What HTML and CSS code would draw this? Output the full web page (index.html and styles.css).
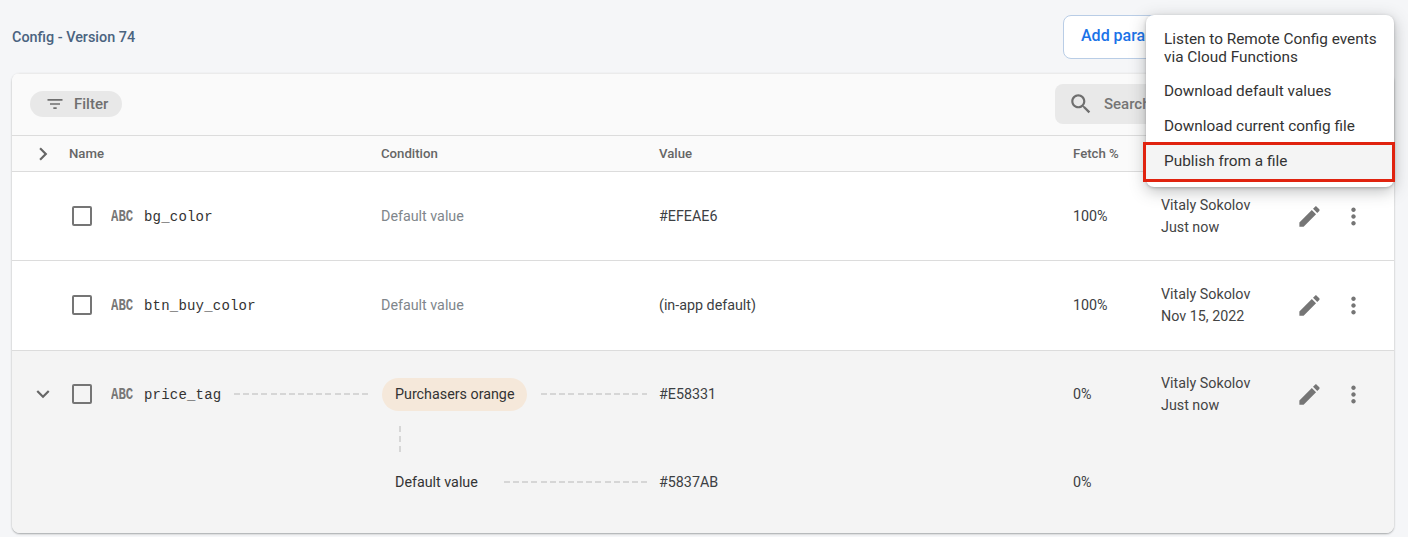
FILE: index.html
```html
<!DOCTYPE html>
<html lang="en">
<head>
    <meta charset="UTF-8">
    <meta name="viewport" content="width=device-width, initial-scale=1.0">
    <title>Remote Config</title>
    <link rel="stylesheet" href="styles.css">
</head>
<body>

    <div class="topbar">
        <span class="version">Config - Version 74</span>
        <div class="add-btn">Add parameter</div>
    </div>

    <div class="card">
        <div class="toolbar">
            <div class="filter">
                <svg class="filter-icon" viewBox="0 0 24 24"><path d="M10 18h4v-2h-4v2zM3 6v2h18V6H3zm3 7h12v-2H6v2z"/></svg>
                Filter
            </div>
            <div class="search">
                <svg class="search-icon" viewBox="0 0 24 24"><path d="M15.5 14h-.79l-.28-.27C15.41 12.59 16 11.11 16 9.5 16 5.91 13.09 3 9.5 3S3 5.91 3 9.5 5.91 16 9.5 16c1.61 0 3.09-.59 4.23-1.57l.27.28v.79l5 4.99L20.49 19l-4.99-5zm-6 0C7.01 14 5 11.99 5 9.5S7.01 5 9.5 5 14 7.01 14 9.5 11.99 14 9.5 14z"/></svg>
                Search
            </div>
        </div>

        <div class="grid head">
            <div class="toggle"><svg class="chevron" viewBox="0 0 24 24"><path d="M10 6L8.59 7.41 13.17 12l-4.58 4.59L10 18l6-6z"/></svg></div>
            <div>Name</div>
            <div>Condition</div>
            <div>Value</div>
            <div>Fetch %</div>
            <div></div>
        </div>

        <div class="grid row">
            <div class="toggle"></div>
            <div class="name">
                <span class="check"></span>
                <span class="abc">ABC</span>
                <span class="key">bg_color</span>
            </div>
            <div class="muted">Default value</div>
            <div>#EFEAE6</div>
            <div>100%</div>
            <div class="meta">
                <div class="who">Vitaly Sokolov<br>Just now</div>
                <svg class="icon" viewBox="0 0 24 24"><path d="M3 17.25V21h3.75L17.81 9.94l-3.75-3.75L3 17.25zM20.71 7.04c.39-.39.39-1.02 0-1.41l-2.34-2.34c-.39-.39-1.02-.39-1.41 0l-1.83 1.83 3.75 3.75 1.83-1.83z"/></svg>
                <svg class="icon dots" viewBox="0 0 24 24"><path d="M12 8c1.1 0 2-.9 2-2s-.9-2-2-2-2 .9-2 2 .9 2 2 2zm0 2c-1.1 0-2 .9-2 2s.9 2 2 2 2-.9 2-2-.9-2-2-2zm0 6c-1.1 0-2 .9-2 2s.9 2 2 2 2-.9 2-2-.9-2-2-2z"/></svg>
            </div>
        </div>

        <div class="grid row">
            <div class="toggle"></div>
            <div class="name">
                <span class="check"></span>
                <span class="abc">ABC</span>
                <span class="key">btn_buy_color</span>
            </div>
            <div class="muted">Default value</div>
            <div>(in-app default)</div>
            <div>100%</div>
            <div class="meta">
                <div class="who">Vitaly Sokolov<br>Nov 15, 2022</div>
                <svg class="icon" viewBox="0 0 24 24"><path d="M3 17.25V21h3.75L17.81 9.94l-3.75-3.75L3 17.25zM20.71 7.04c.39-.39.39-1.02 0-1.41l-2.34-2.34c-.39-.39-1.02-.39-1.41 0l-1.83 1.83 3.75 3.75 1.83-1.83z"/></svg>
                <svg class="icon dots" viewBox="0 0 24 24"><path d="M12 8c1.1 0 2-.9 2-2s-.9-2-2-2-2 .9-2 2 .9 2 2 2zm0 2c-1.1 0-2 .9-2 2s.9 2 2 2 2-.9 2-2-.9-2-2-2zm0 6c-1.1 0-2 .9-2 2s.9 2 2 2 2-.9 2-2-.9-2-2-2z"/></svg>
            </div>
        </div>

        <div class="expanded">
            <div class="grid row-open">
                <div class="toggle"><svg class="chevron" viewBox="0 0 24 24"><path d="M16.59 8.59L12 13.17 7.41 8.59 6 10l6 6 6-6z"/></svg></div>
                <div class="name">
                    <span class="check"></span>
                    <span class="abc">ABC</span>
                    <span class="key">price_tag</span>
                    <span class="dash dash-name"></span>
                </div>
                <div class="cond">
                    <span class="pill">Purchasers orange</span>
                    <span class="dash dash-cond"></span>
                </div>
                <div>#E58331</div>
                <div>0%</div>
                <div class="meta">
                    <div class="who">Vitaly Sokolov<br>Just now</div>
                    <svg class="icon" viewBox="0 0 24 24"><path d="M3 17.25V21h3.75L17.81 9.94l-3.75-3.75L3 17.25zM20.71 7.04c.39-.39.39-1.02 0-1.41l-2.34-2.34c-.39-.39-1.02-.39-1.41 0l-1.83 1.83 3.75 3.75 1.83-1.83z"/></svg>
                    <svg class="icon dots" viewBox="0 0 24 24"><path d="M12 8c1.1 0 2-.9 2-2s-.9-2-2-2-2 .9-2 2 .9 2 2 2zm0 2c-1.1 0-2 .9-2 2s.9 2 2 2 2-.9 2-2-.9-2-2-2zm0 6c-1.1 0-2 .9-2 2s.9 2 2 2 2-.9 2-2-.9-2-2-2z"/></svg>
                </div>
            </div>
            <div class="grid row-sub">
                <div></div>
                <div></div>
                <div class="cond cond-default">
                    <span class="connector"></span>
                    <span class="default-label">Default value</span>
                    <span class="dash dash-default"></span>
                </div>
                <div>#5837AB</div>
                <div>0%</div>
                <div></div>
            </div>
        </div>
    </div>

    <div class="menu">
        <div class="menu-item two-line">Listen to Remote Config events via Cloud Functions</div>
        <div class="menu-item">Download default values</div>
        <div class="menu-item">Download current config file</div>
        <div class="menu-item active">Publish from a file</div>
    </div>

</body>
</html>
```

FILE: styles.css
```css
html, body {
    height: 100%;
}

body {
    margin: 0;
    padding: 0 14px 0 12px;
    box-sizing: border-box;
    overflow: hidden;
    font-family: Roboto, Arial, sans-serif;
    font-size: 14.3px;
    color: #3c4043;
    background-color: #f5f6f8;
}

.topbar {
    display: flex;
    align-items: center;
    justify-content: space-between;
    height: 73px;
}

.version {
    padding-top: 1px;
    font-size: 14.4px;
    font-weight: 500;
    color: #4a6380;
}

.add-btn {
    width: 260px;
    height: 44px;
    margin-right: 71px;
    padding: 0 0 2px 17px;
    box-sizing: border-box;
    display: flex;
    align-items: center;
    font-size: 16px;
    font-weight: 500;
    color: #1a73e8;
    background-color: #fff;
    border: 1px solid #b9cde6;
    border-radius: 8px;
}

.card {
    height: 460px;
    background-color: #fff;
    border-radius: 8px;
    box-shadow: 0 1px 2px rgba(60, 64, 67, 0.45);
    overflow: hidden;
}

.toolbar {
    display: flex;
    align-items: center;
    justify-content: space-between;
    height: 63px;
    padding: 0 12px 2px 18px;
    background-color: #fafafa;
    border-bottom: 1px solid #dcdcdc;
    border-top: 1px solid #ebebeb;
    box-sizing: border-box;
}

.filter {
    display: flex;
    align-items: center;
    width: 92px;
    height: 26px;
    box-sizing: border-box;
    padding-left: 15px;
    font-size: 15px;
    font-weight: 500;
    color: #6f6f6f;
    background-color: #e8e8e8;
    border-radius: 13px;
}

.filter-icon {
    width: 20px;
    height: 20px;
    margin-right: 9px;
    fill: #6f6f6f;
}

.search {
    display: flex;
    align-items: center;
    width: 327px;
    height: 40px;
    box-sizing: border-box;
    padding-left: 13px;
    font-size: 15px;
    font-weight: 500;
    color: #757575;
    background-color: #e9e9e9;
    border-radius: 8px;
}

.search-icon {
    width: 26px;
    height: 26px;
    margin-right: 10px;
    fill: #6f6f6f;
}

.grid {
    display: grid;
    grid-template-columns: 57px 312px 278px 414px 88px 1fr;
    align-items: center;
}

.head {
    height: 36px;
    font-size: 13.2px;
    font-weight: 500;
    color: #666;
    background-color: #fafafa;
    border-bottom: 1px solid #dcdcdc;
    box-sizing: border-box;
}

.row {
    height: 89px;
    border-bottom: 1px solid #dcdcdc;
    box-sizing: border-box;
}

.row + .row {
    height: 90px;
    padding-bottom: 1px;
}

.expanded {
    height: 182px;
    background-color: #f4f4f4;
}

.row-open {
    height: 86px;
}

.row-sub {
    height: 90px;
}

.toggle {
    display: flex;
    justify-content: flex-end;
    padding-right: 13px;
}

.chevron {
    width: 26px;
    height: 26px;
    fill: #666;
}

.name {
    display: flex;
    align-items: center;
}

.check {
    width: 20px;
    height: 20px;
    box-sizing: border-box;
    margin: 0 19px 0 3px;
    border: 2px solid #757575;
    border-radius: 2px;
}

.abc {
    width: 33px;
    padding-top: 2px;
    font-family: "Liberation Mono", monospace;
    font-size: 16px;
    font-weight: 700;
    color: #777;
    display: inline-block;
    transform: scaleX(0.77);
    transform-origin: left center;
}

.key {
    padding-top: 1px;
    font-family: "Liberation Mono", monospace;
    font-size: 14px;
    letter-spacing: 0.2px;
    color: #333;
}

.muted {
    color: #80868b;
}

.cond {
    display: flex;
    align-items: center;
    position: relative;
}

.pill {
    margin-left: 1px;
    padding: 0 13px;
    height: 33px;
    line-height: 33px;
    background-color: #f5e8da;
    border-radius: 17px;
    color: #333;
}

.dash {
    flex: 1;
    height: 2px;
    background-image: repeating-linear-gradient(to right, #d6d6d6 0, #d6d6d6 6px, transparent 6px, transparent 9.14px);
}

.dash-name {
    margin: 0 13px 0 13px;
}

.dash-cond {
    margin: 0 12px 0 14px;
}

.cond-default {
    padding-left: 14px;
}

.default-label {
    color: #333;
}

.dash-default {
    margin: 0 12px 0 26px;
}

.connector {
    position: absolute;
    left: 18px;
    top: -48px;
    width: 2px;
    height: 28px;
    background-image: repeating-linear-gradient(to bottom, #d6d6d6 0, #d6d6d6 6px, transparent 6px, transparent 10px);
}

.meta {
    display: flex;
    align-items: center;
}

.who {
    width: 125px;
    line-height: 22px;
    color: #444;
}

.icon {
    width: 27px;
    height: 27px;
    fill: #757575;
    margin-left: 10px;
    flex: none;
}

.dots {
    margin-left: 17px;
}

.menu {
    position: absolute;
    top: 15px;
    left: 1146px;
    width: 248px;
    height: 172px;
    padding-top: 9px;
    box-sizing: border-box;
    background-color: #fff;
    border-radius: 8px;
    box-shadow: 0 4px 16px rgba(60, 64, 67, 0.35), 0 1px 3px rgba(60, 64, 67, 0.3);
}

.menu-item {
    display: flex;
    align-items: center;
    height: 35px;
    padding: 0 15px 0 18px;
    font-size: 15.35px;
    line-height: 18px;
    color: #333;
}

.two-line {
    height: 48px;
    margin-bottom: 1px;
}

.active {
    box-sizing: border-box;
    height: 40px;
    margin: -1px -1px 0 -3px;
    padding-bottom: 2px;
    background-color: #f4f4f4;
    border: 3px solid #e0230f;
}
```
